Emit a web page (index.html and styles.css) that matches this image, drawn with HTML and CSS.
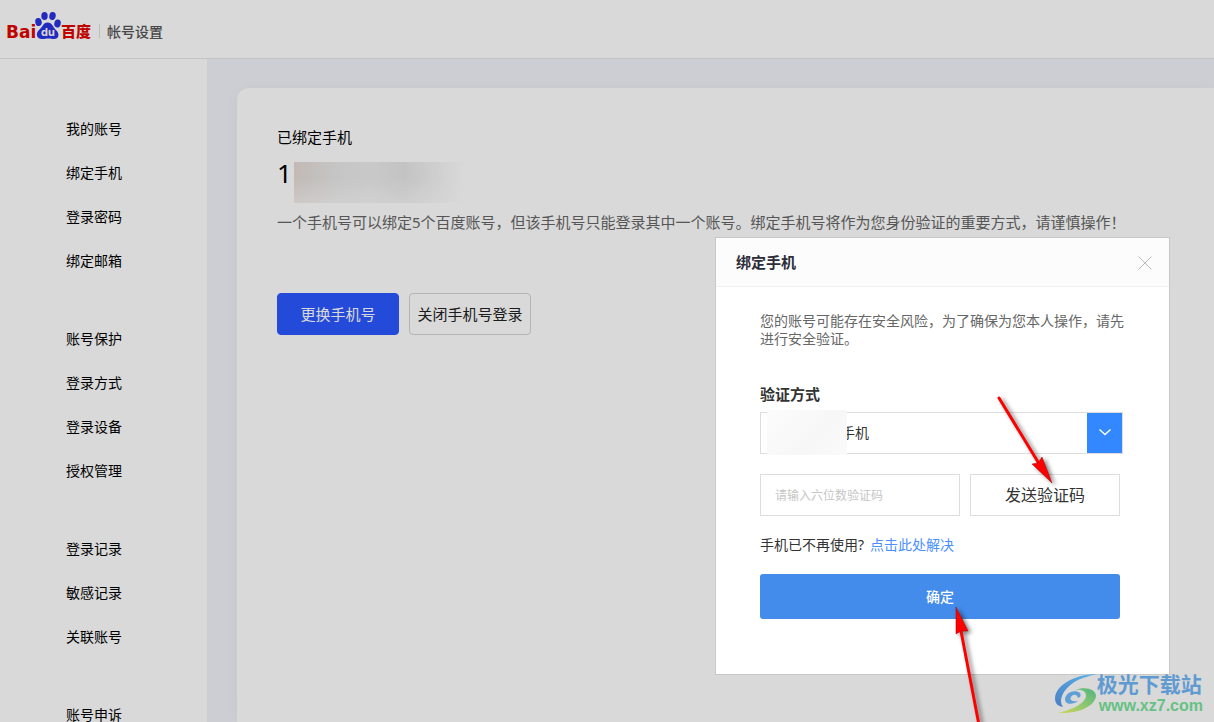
FILE: index.html
```html
<!DOCTYPE html>
<html lang="zh-CN">
<head>
<meta charset="utf-8">
<title>帐号设置</title>
<link rel="stylesheet" href="styles.css">
</head>
<body>
<div class="page">
  <header class="header">
    <svg class="logo" viewBox="0 0 86 30" role="img" aria-label="Baidu 百度">
      <text class="logo-latin" x="-1" y="27">Bai</text>
      <g fill="#2932e1">
        <ellipse cx="31.500" cy="11" rx="3.200" ry="4" transform="rotate(-12 31.500 11)"/>
        <ellipse cx="37.500" cy="5" rx="3.200" ry="4"/>
        <ellipse cx="45.500" cy="5" rx="3.200" ry="4" transform="rotate(10 45.500 5)"/>
        <ellipse cx="50.500" cy="12.500" rx="3.200" ry="4" transform="rotate(12 50.500 12.500)"/>
        <path d="M40.500 11.500C36 11.500 36 16 32 19C28 23 30 28 35 28C38 28 39 27.500 41 27.500C44 27.500 45 28 47 28C52 28 53 23 49 19C46 16.500 45.500 11.500 40.500 11.500Z"/>
      </g>
      <text class="logo-du" x="34" y="25">du</text>
      <text class="logo-cn" x="54" y="26">百度</text>
    </svg>
    <span class="header-rule"></span>
    <span class="header-title">帐号设置</span>
  </header>
  <div class="columns">
    <nav class="sidebar">
      <ul class="menu">
        <li><a href="#">我的账号</a></li>
        <li><a href="#">绑定手机</a></li>
        <li><a href="#">登录密码</a></li>
        <li><a href="#">绑定邮箱</a></li>
      </ul>
      <ul class="menu">
        <li><a href="#">账号保护</a></li>
        <li><a href="#">登录方式</a></li>
        <li><a href="#">登录设备</a></li>
        <li><a href="#">授权管理</a></li>
      </ul>
      <ul class="menu">
        <li><a href="#">登录记录</a></li>
        <li><a href="#">敏感记录</a></li>
        <li><a href="#">关联账号</a></li>
      </ul>
      <ul class="menu">
        <li><a href="#">账号申诉</a></li>
      </ul>
    </nav>
    <main class="main">
      <section class="card">
        <h1 class="card-title">已绑定手机</h1>
        <div class="phone"><span>1</span><span class="phone-mask"></span></div>
        <p class="note">一个手机号可以绑定5个百度账号，但该手机号只能登录其中一个账号。绑定手机号将作为您身份验证的重要方式，请谨慎操作！</p>
        <div class="actions">
          <button class="btn btn-primary" type="button">更换手机号</button>
          <button class="btn" type="button">关闭手机号登录</button>
        </div>
      </section>
    </main>
  </div>
  <div class="overlay"></div>

  <section class="dialog" role="dialog" aria-labelledby="dialog-title">
    <header class="dialog-head">
      <h2 class="dialog-title" id="dialog-title">绑定手机</h2>
      <button class="close" type="button" aria-label="关闭">
        <svg width="14" height="14" viewBox="0 0 14 14"><path d="M0.500 0.500L13.500 13.500M13.500 0.500L0.500 13.500" stroke="#bbb" fill="none"/></svg>
      </button>
    </header>
    <form class="dialog-body">
      <p class="tip">您的账号可能存在安全风险，为了确保为您本人操作，请先进行安全验证。</p>
      <label class="field-label" for="method">验证方式</label>
      <div class="picker">
        <select class="picker-select" id="method"><option>手机</option></select>
        <span class="picker-arrow"><svg width="12" height="7" viewBox="0 0 12 7"><path d="M0.500 0.500L6 5.500L11.500 0.500" stroke="#fff" stroke-width="1.400" fill="none"/></svg></span>
        <span class="picker-mask"></span>
      </div>
      <div class="code-row">
        <input class="code" type="text" placeholder="请输入六位数验证码" aria-label="验证码">
        <button class="send" type="button">发送验证码</button>
      </div>
      <p class="help">手机已不再使用?<a href="#">点击此处解决</a></p>
      <button class="confirm" type="button">确定</button>
    </form>
  </section>

  <svg class="pointer pointer-send" width="80" height="110" viewBox="0 0 80 110">
    <path d="M11 10L50 74" stroke="#f00" stroke-width="3" stroke-linecap="round"/>
    <path d="M64 95L44 76L50 75L54 69Z" fill="#f00" stroke="#a00000" stroke-width="0.500"/>
  </svg>
  <svg class="pointer pointer-confirm" width="60" height="126" viewBox="0 0 60 126">
    <path d="M20 34L38 128" stroke="#f00" stroke-width="3"/>
    <path d="M15 10L15 37L20 34L27 34Z" fill="#f00" stroke="#a00000" stroke-width="0.500"/>
  </svg>

  <div class="watermark">
    <svg width="42" height="40" viewBox="0 0 42 40">
      <defs>
        <linearGradient id="blue" x1="0" y1="1" x2="1" y2="0"><stop offset="0" stop-color="#4a7fc4"/><stop offset="1" stop-color="#58b6ea"/></linearGradient>
        <linearGradient id="green" x1="0" y1="1" x2="1" y2="0"><stop offset="0" stop-color="#cfd85a"/><stop offset="1" stop-color="#4fb583"/></linearGradient>
      </defs>
      <path d="M42 0C22 0 1 10 0 24C0 30 3 32 8 33C3 26 8 16 18 9C25 4 34 2 42 0Z" fill="url(#blue)"/>
      <path d="M20 16C30 12 41 15 41 22C40 32 24 40 3 39C16 36 30 30 31 22C31 17 27 15 20 16Z" fill="url(#green)"/>
      <path d="M25 19C20 15 11 18 10 25C10 31 18 31 23 27C18 28 14 26 16 23C18 20 22 20 23 24C26 23 26 21 25 19Z" fill="#5d9fd6"/>
    </svg>
    <div class="watermark-text">
      <span class="watermark-name">极光下载站</span>
      <span class="watermark-url">www.xz7.com</span>
    </div>
  </div>
</div>
</body>
</html>
```
FILE: styles.css
```css
* {
  box-sizing: border-box;
}

body {
  margin: 0;
  font-family: "Noto Sans", "Noto Sans CJK SC", sans-serif;
  font-size: 14px;
  color: #000;
}

h1, h2, p, ul {
  margin: 0;
  padding: 0;
}

button, input, select {
  font-family: inherit;
  margin: 0;
}

a {
  text-decoration: none;
}

.page {
  position: relative;
  height: 100vh;
  overflow: hidden;
  display: flex;
  flex-direction: column;
  background: #fff;
}

.header {
  flex: none;
  display: flex;
  align-items: center;
  height: 59px;
  padding-left: 7px;
  border-bottom: 1px solid #e6e6e6;
}

.logo {
  width: 86px;
  height: 30px;
  margin-bottom: 6px;
  overflow: visible;
}

.logo-latin {
  font: 700 17px "DejaVu Sans", sans-serif;
  fill: #e10601;
}

.logo-du {
  font: 700 11px Inter, sans-serif;
  fill: #fff;
}

.logo-cn {
  font: 900 15px "Noto Sans CJK SC", sans-serif;
  fill: #e10601;
}

.header-rule {
  width: 1px;
  height: 14px;
  margin: 4px 7px 0 6px;
  background: #e0e0e0;
}

.header-title {
  margin-top: 4px;
  color: #555;
  font-weight: 500;
}

.columns {
  flex: 1;
  min-height: 0;
  display: flex;
}

.sidebar {
  flex: none;
  width: 207px;
  padding: 48px 0 0 66px;
}

.menu {
  list-style: none;
  margin-bottom: 34px;
  line-height: 44px;
}

.menu a {
  color: #000;
}

.main {
  flex: 1;
  display: flex;
  min-width: 0;
  padding: 29px 0 0 30px;
  background: #f1f3fa;
}

.card {
  flex: 1;
  min-width: 0;
  padding: 38px 40px 40px;
  background: #fff;
  border-radius: 12px 0 0 0;
  box-shadow: 0 0 20px rgba(0, 0, 40, 0.04);
}

.card-title {
  font-size: 15px;
  font-weight: 400;
  line-height: 22px;
}

.phone {
  display: flex;
  align-items: flex-start;
  gap: 2px;
  height: 52px;
  font-size: 26px;
  line-height: 50px;
}

.phone-mask {
  width: 170px;
  height: 41px;
  margin-top: 14px;
  background: linear-gradient(90deg, #e4dad5, #e8e8e8 25%, #ececec 45%, #e6e6e6 65%, #fff);
  -webkit-mask-image: linear-gradient(#000 40%, rgba(0, 0, 0, 0.5));
  mask-image: linear-gradient(#000 40%, rgba(0, 0, 0, 0.5));
}

.note {
  font-size: 15px;
  line-height: 44px;
  color: #666;
}

.actions {
  display: flex;
  gap: 10px;
  margin-top: 49px;
}

.btn {
  width: 122px;
  height: 42px;
  padding: 0 0 2px;
  font-size: 15px;
  color: #222;
  background: #fff;
  border: 1px solid #d5d5d5;
  border-radius: 4px;
}

.btn-primary {
  color: #fff;
  background: #2b57ff;
  border-color: #2b57ff;
}

.overlay {
  position: absolute;
  inset: 0;
  background: rgba(0, 0, 0, 0.15);
}

.dialog {
  position: absolute;
  top: 237px;
  right: 44px;
  width: 455px;
  background: #fff;
  border: 1px solid #c8c8c8;
}

.dialog-head {
  display: flex;
  align-items: center;
  justify-content: space-between;
  height: 49px;
  padding: 0 17px 0 20px;
  background: #fcfcfc;
  border-bottom: 1px solid #f0f0f0;
}

.dialog-title {
  padding-bottom: 2px;
  font-size: 15px;
  font-weight: 700;
  color: #2e2e3a;
}

.close {
  display: flex;
  padding: 0;
  margin-top: 2px;
  background: none;
  border: 0;
}

.dialog-body {
  padding: 25px 43px 55px 44px;
}

.tip {
  line-height: 18px;
  color: #666;
}

.field-label {
  display: block;
  margin-top: 35px;
  font-size: 15px;
  font-weight: 700;
  line-height: 22px;
  color: #333;
}

.picker {
  position: relative;
  display: flex;
  width: 363px;
  height: 42px;
  margin-top: 7px;
  border: 1px solid #ddd;
}

.picker-select {
  flex: 1;
  appearance: none;
  padding: 0 0 2px 80px;
  border: 0;
  background: #fff;
  font-size: 14px;
  color: #333;
}

.picker-arrow {
  display: flex;
  align-items: center;
  justify-content: center;
  width: 35px;
  padding-bottom: 2px;
  background: #3388ff;
}

.picker-mask {
  position: absolute;
  top: -3px;
  left: 6px;
  width: 80px;
  height: 45px;
  background: linear-gradient(135deg, #fcfcfc, #f7f7f7 60%, #fafafa);
}

.code-row {
  display: flex;
  gap: 10px;
  width: 360px;
  margin-top: 20px;
}

.code {
  width: 200px;
  height: 42px;
  padding: 0 14px;
  border: 1px solid #ddd;
  font-size: 12px;
}

.code::placeholder {
  color: #c6c6c6;
}

.send {
  width: 150px;
  height: 42px;
  padding: 0 0 2px;
  background: #fff;
  border: 1px solid #ddd;
  font-size: 16px;
  color: #333;
}

.help {
  margin-top: 18px;
  line-height: 22px;
  color: #333;
}

.help a {
  margin-left: 6px;
  color: #4a90ff;
}

.confirm {
  display: block;
  width: 360px;
  height: 45px;
  margin-top: 18px;
  padding: 0 0 2px;
  border: 0;
  border-radius: 3px;
  background: #438ceb;
  color: #fff;
  font-size: 14px;
  font-weight: 500;
}

.pointer {
  position: absolute;
  filter: drop-shadow(3px 2px 2px rgba(0, 0, 0, 0.5));
  pointer-events: none;
}

.pointer-send {
  top: 388px;
  right: 146px;
}

.pointer-confirm {
  top: 597px;
  right: 213px;
}

.watermark {
  position: absolute;
  right: 11px;
  bottom: 6px;
  display: flex;
  align-items: center;
}

.watermark-text {
  display: flex;
  flex-direction: column;
}

.watermark-name {
  font-size: 21px;
  font-weight: 700;
  line-height: 24px;
  color: #5f9bd1;
}

.watermark-url {
  padding-left: 2px;
  font: 700 16px/20px "Liberation Sans", sans-serif;
  color: #66c184;
}
```
